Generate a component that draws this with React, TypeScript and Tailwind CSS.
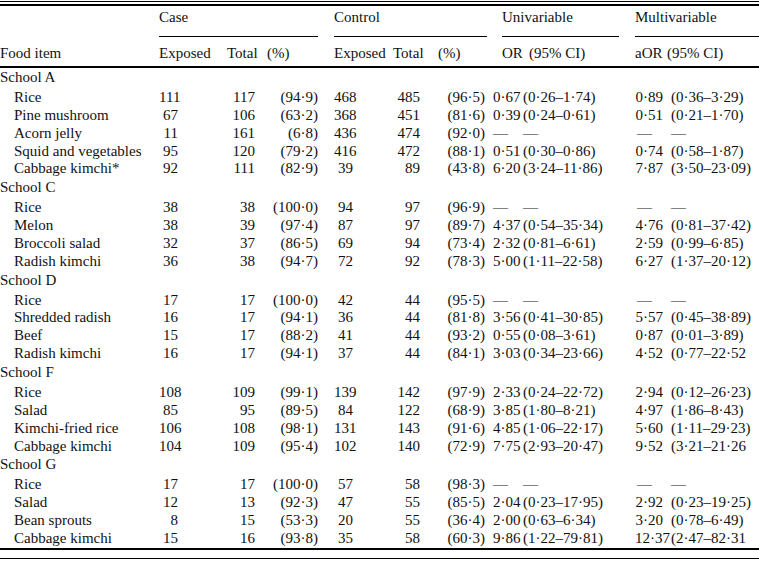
import React from 'react';

interface Item {
  name: string;
  v: string[]; // case exp, case total, case %, ctrl exp, ctrl total, ctrl %, OR, CI, aOR, aCI
}

interface School {
  title: string;
  items: Item[];
}

const D = '—';

const schools: School[] = [
  {
    title: 'School A',
    items: [
      { name: 'Rice', v: ['111', '117', '(94·9)', '468', '485', '(96·5)', '0·67', '(0·26–1·74)', '0·89', '(0·36–3·29)'] },
      { name: 'Pine mushroom', v: ['67', '106', '(63·2)', '368', '451', '(81·6)', '0·39', '(0·24–0·61)', '0·51', '(0·21–1·70)'] },
      { name: 'Acorn jelly', v: ['11', '161', '(6·8)', '436', '474', '(92·0)', D, D, D, D] },
      { name: 'Squid and vegetables', v: ['95', '120', '(79·2)', '416', '472', '(88·1)', '0·51', '(0·30–0·86)', '0·74', '(0·58–1·87)'] },
      { name: 'Cabbage kimchi*', v: ['92', '111', '(82·9)', '39', '89', '(43·8)', '6·20', '(3·24–11·86)', '7·87', '(3·50–23·09)'] },
    ],
  },
  {
    title: 'School C',
    items: [
      { name: 'Rice', v: ['38', '38', '(100·0)', '94', '97', '(96·9)', D, D, D, D] },
      { name: 'Melon', v: ['38', '39', '(97·4)', '87', '97', '(89·7)', '4·37', '(0·54–35·34)', '4·76', '(0·81–37·42)'] },
      { name: 'Broccoli salad', v: ['32', '37', '(86·5)', '69', '94', '(73·4)', '2·32', '(0·81–6·61)', '2·59', '(0·99–6·85)'] },
      { name: 'Radish kimchi', v: ['36', '38', '(94·7)', '72', '92', '(78·3)', '5·00', '(1·11–22·58)', '6·27', '(1·37–20·12)'] },
    ],
  },
  {
    title: 'School D',
    items: [
      { name: 'Rice', v: ['17', '17', '(100·0)', '42', '44', '(95·5)', D, D, D, D] },
      { name: 'Shredded radish', v: ['16', '17', '(94·1)', '36', '44', '(81·8)', '3·56', '(0·41–30·85)', '5·57', '(0·45–38·89)'] },
      { name: 'Beef', v: ['15', '17', '(88·2)', '41', '44', '(93·2)', '0·55', '(0·08–3·61)', '0·87', '(0·01–3·89)'] },
      { name: 'Radish kimchi', v: ['16', '17', '(94·1)', '37', '44', '(84·1)', '3·03', '(0·34–23·66)', '4·52', '(0·77–22·52'] },
    ],
  },
  {
    title: 'School F',
    items: [
      { name: 'Rice', v: ['108', '109', '(99·1)', '139', '142', '(97·9)', '2·33', '(0·24–22·72)', '2·94', '(0·12–26·23)'] },
      { name: 'Salad', v: ['85', '95', '(89·5)', '84', '122', '(68·9)', '3·85', '(1·80–8·21)', '4·97', '(1·86–8·43)'] },
      { name: 'Kimchi-fried rice', v: ['106', '108', '(98·1)', '131', '143', '(91·6)', '4·85', '(1·06–22·17)', '5·60', '(1·11–29·23)'] },
      { name: 'Cabbage kimchi', v: ['104', '109', '(95·4)', '102', '140', '(72·9)', '7·75', '(2·93–20·47)', '9·52', '(3·21–21·26'] },
    ],
  },
  {
    title: 'School G',
    items: [
      { name: 'Rice', v: ['17', '17', '(100·0)', '57', '58', '(98·3)', D, D, D, D] },
      { name: 'Salad', v: ['12', '13', '(92·3)', '47', '55', '(85·5)', '2·04', '(0·23–17·95)', '2·92', '(0·23–19·25)'] },
      { name: 'Bean sprouts', v: ['8', '15', '(53·3)', '20', '55', '(36·4)', '2·00', '(0·63–6·34)', '3·20', '(0·78–6·49)'] },
      { name: 'Cabbage kimchi', v: ['15', '16', '(93·8)', '35', '58', '(60·3)', '9·86', '(1·22–79·81)', '12·37', '(2·47–82·31'] },
    ],
  },
];

// same column template for every row
const cols = 'grid grid-cols-[159px_68px_32px_75px_59px_45px_55px_30px_112px_35px_89px]';

// alignment of the data cells, one per value column
const cellClass = [
  'text-right pr-[49px]',
  'text-right pr-[4px]',
  'text-right pr-[16px]',
  'text-right pr-[40px]',
  'text-right pr-[18px]',
  'text-right pr-[8px]',
  'text-left',
  'text-left',
  'text-right pr-[7px]',
  'text-left pl-px',
];

function ItemRow({ item }: { item: Item }) {
  return (
    <div className={`${cols} h-[17.85px] leading-[17.85px]`}>
      <div className="pl-[14px]">{item.name}</div>
      {item.v.map((val, i) => (
        // dashes in the aOR column sit at the left, like the other dashes
        <div key={i} className={i === 8 && val === D ? 'text-left pl-[2px]' : cellClass[i]}>
          {val}
        </div>
      ))}
    </div>
  );
}

export default function App() {
  return (
    <div className="w-[759px] h-[561px] overflow-hidden bg-white text-[#111] [font-family:'Liberation_Serif',serif] text-[15px] leading-[18px] whitespace-nowrap">
      {/* top double rule */}
      <div className="mt-px h-px bg-black" />
      <div className="mt-[2px] h-[2px] bg-black" />

      {/* group headings */}
      <div className={`${cols} h-[31px]`}>
        <div />
        <div className="col-span-3 flex flex-col pt-[2px]">
          <span>Case</span>
          <div className="mt-auto h-px w-[159px] bg-black" />
        </div>
        <div className="col-span-3 flex flex-col pt-[2px]">
          <span>Control</span>
          <div className="mt-auto h-px w-[153px] bg-black" />
        </div>
        <div className="col-span-2 flex flex-col pt-[2px] pl-[9px]">
          <span>Univariable</span>
          <div className="mt-auto h-px w-[117px] bg-black" />
        </div>
        <div className="col-span-2 flex flex-col pt-[2px]">
          <span>Multivariable</span>
          <div className="mt-auto h-px w-full bg-black" />
        </div>
      </div>

      {/* column headings */}
      <div className={`${cols} h-[29px] pt-[7px]`}>
        <div>Food item</div>
        <div>Exposed</div>
        <div>Total</div>
        <div className="pl-[8px]">(%)</div>
        <div>Exposed</div>
        <div>Total</div>
        <div>(%)</div>
        <div className="pl-[9px]">OR</div>
        <div className="pl-[6px]">(95% CI)</div>
        <div>aOR</div>
        <div className="-ml-[3px]">(95% CI)</div>
      </div>
      <div className="h-[2px] bg-black" />

      {/* body */}
      <div>
        {schools.map((s) => (
          <div key={s.title}>
            <div className="h-[21px]">{s.title}</div>
            {s.items.map((it, i) => (
              <ItemRow key={i} item={it} />
            ))}
          </div>
        ))}
      </div>

      {/* bottom double rule */}
      <div className="h-[2px] bg-black" />
      <div className="mt-[8px] h-px bg-black" />
    </div>
  );
}
